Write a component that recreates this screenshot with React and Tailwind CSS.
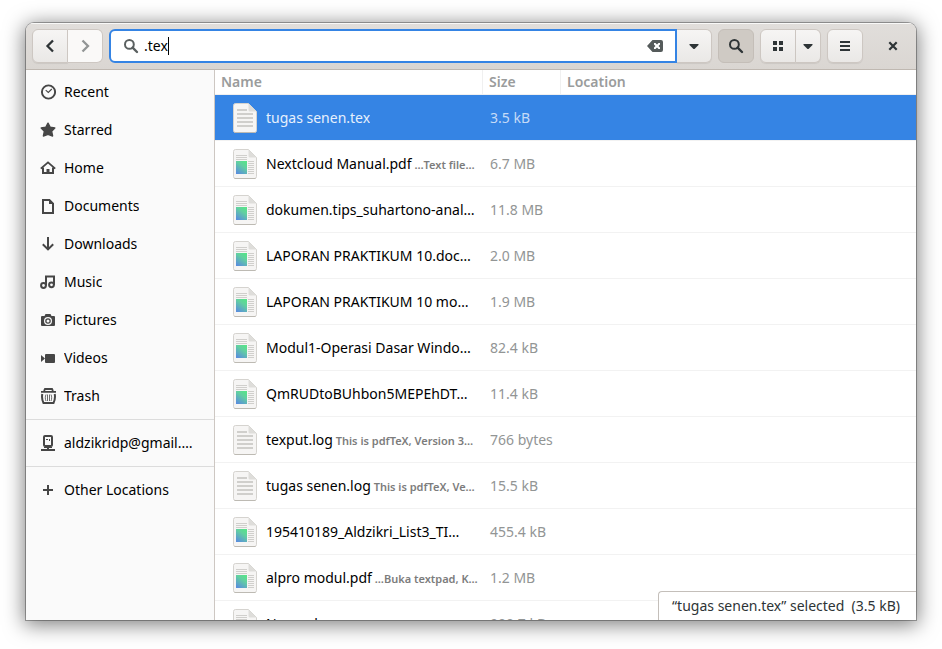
import React from "react";

const Icon = ({ children, className = "" }) => (
  <svg viewBox="0 0 16 16" width="16" height="16" fill="currentColor" className={`shrink-0 ${className}`} aria-hidden="true">
    {children}
  </svg>
);

const SearchIcon = ({ className }) => (
  <Icon className={className}>
    <circle cx="6.4" cy="6.4" r="4.4" fill="none" stroke="currentColor" strokeWidth="2" />
    <path d="M9.6 9.6 L14 14" stroke="currentColor" strokeWidth="2.4" strokeLinecap="round" />
  </Icon>
);

const CaretDown = () => (
  <Icon>
    <path d="M3.5 6h9v1L8.5 11h-1L3.5 7z" />
  </Icon>
);

const icons = {
  recent: (
    <Icon>
      <circle cx="8.5" cy="8" r="6.6" fill="none" stroke="currentColor" strokeWidth="1.9" />
      <path d="M5.7 6.2 8.3 8.5 11.8 5" fill="none" stroke="currentColor" strokeWidth="1.1" />
    </Icon>
  ),
  starred: (
    <Icon>
      <path
        d="M8 1.2 10.1 5.2 14.8 5.9 11.6 9.2 12.6 14 8 12.3 3.4 14 4.4 9.2 1.2 5.9 5.9 5.2z"
        stroke="currentColor"
        strokeWidth="1.4"
        strokeLinejoin="round"
      />
    </Icon>
  ),
  home: (
    <Icon>
      <path d="M.8 8.6 8 2.4l7.2 6.2" fill="none" stroke="currentColor" strokeWidth="1.9" />
      <path d="M3 7.5V13h10V7.5" fill="none" stroke="currentColor" strokeWidth="2" />
      <path d="M6.5 9h3v4h-3z" />
    </Icon>
  ),
  documents: (
    <Icon>
      <path d="M3 2h6.4L13 5.6V15H3z" fill="none" stroke="currentColor" strokeWidth="2" />
      <path d="M9 2v4h4z" />
    </Icon>
  ),
  downloads: (
    <Icon>
      <path d="M8 1v12M2.800 8.200 8 13.400l5.200-5.200" fill="none" stroke="currentColor" strokeWidth="2" />
    </Icon>
  ),
  music: (
    <Icon>
      <circle cx="3.5" cy="11.5" r="2.4" fill="none" stroke="currentColor" strokeWidth="2" />
      <circle cx="11.5" cy="10.8" r="2.4" fill="none" stroke="currentColor" strokeWidth="2" />
      <path d="M6 11.5V2.5h8V11" fill="none" stroke="currentColor" strokeWidth="2" />
    </Icon>
  ),
  pictures: (
    <Icon>
      <path
        fillRule="evenodd"
        d="M5.5 2h5l1 2H14a1 1 0 0 1 1 1v8a1 1 0 0 1-1 1H2a1 1 0 0 1-1-1V5a1 1 0 0 1 1-1h2.500zM8 5a4 4 0 1 0 0 8 4 4 0 0 0 0-8z"
      />
      <path fillRule="evenodd" d="M8 6.200a2.800 2.800 0 1 0 0 5.600 2.800 2.800 0 0 0 0-5.600zM8 7.500a1.500 1.500 0 1 1 0 3 1.500 1.500 0 0 1 0-3z" />
    </Icon>
  ),
  videos: (
    <Icon>
      <rect x="5" y="4" width="10" height="9" rx="1" />
      <path d="M1 5v7l4-3.500z" />
    </Icon>
  ),
  trash: (
    <Icon>
      <path d="M1 3.900h15M4 3l1-2h7l1 2" fill="none" stroke="currentColor" strokeWidth="1.800" />
      <path d="M2.300 6c-.6 3-.3 6 1.200 9h10c1.500-3 1.800-6 1.200-9" fill="none" stroke="currentColor" strokeWidth="2" />
      <path d="M6 6.500c-.9 2-.9 4.500 0 6.500M11 6.500c.9 2 .9 4.500 0 6.500M7.500 6.500v6.500M9.500 6.500v6.500" fill="none" stroke="currentColor" strokeWidth=".8" />
    </Icon>
  ),
  server: (
    <Icon>
      <rect x="4" y="1" width="8" height="10" rx="1" fill="none" stroke="currentColor" strokeWidth="2" />
      <path d="M6 4h2v1H6zM9 4h1v2H9zM7 11h2v3H7zM1 14h14v2H1zM4 12h8v1H4z" />
    </Icon>
  ),
  plus: (
    <Icon>
      <path d="M7 3h2v4h4v2H9v4H7V9H3V7h4z" />
    </Icon>
  ),
};

const places = [
  ["recent", "Recent"],
  ["starred", "Starred"],
  ["home", "Home"],
  ["documents", "Documents"],
  ["downloads", "Downloads"],
  ["music", "Music"],
  ["pictures", "Pictures"],
  ["videos", "Videos"],
  ["trash", "Trash"],
];

const files = [
  { type: "text", name: "tugas senen.tex", size: "3.5 kB", selected: true },
  { type: "doc", name: "Nextcloud Manual.pdf", match: "…Text file…", size: "6.7 MB" },
  { type: "doc", name: "dokumen.tips_suhartono-anal…", size: "11.8 MB" },
  { type: "doc", name: "LAPORAN PRAKTIKUM 10.doc…", size: "2.0 MB" },
  { type: "doc", name: "LAPORAN PRAKTIKUM 10 mo…", size: "1.9 MB" },
  { type: "doc", name: "Modul1-Operasi Dasar Windo…", size: "82.4 kB" },
  { type: "doc", name: "QmRUDtoBUhbon5MEPEhDT…", size: "11.4 kB" },
  { type: "text", name: "texput.log", match: "This is pdfTeX, Version 3…", size: "766 bytes" },
  { type: "text", name: "tugas senen.log", match: "This is pdfTeX, Ve…", size: "15.5 kB" },
  { type: "doc", name: "195410189_Aldzikri_List3_TI…", size: "455.4 kB" },
  { type: "doc", name: "alpro modul.pdf", match: "…Buka textpad, K…", size: "1.2 MB" },
  { type: "doc", name: "New-rules.", match: "…format file: Modul…", size: "900.7 kB" },
];

function FileIcon({ type }) {
  return (
    <svg viewBox="0 0 24 30" width="24" height="30" className="shrink-0" aria-hidden="true">
      <defs>
        <linearGradient id="thumb" x1="0.8" y1="0" x2="0.2" y2="1">
          <stop offset="0" stopColor="#57e389" />
          <stop offset="0.35" stopColor="#62d0a0" />
          <stop offset="1" stopColor="#5a8fdc" />
        </linearGradient>
      </defs>
      <path d="M2.500.5h13l8 8v19a2 2 0 0 1-2 2h-19a2 2 0 0 1-2-2v-25a2 2 0 0 1 2-2z" fill="#f6f5f4" stroke="#d5d3cf" />
      <path d="M1.500 29.500h21" stroke="#bdbab3" />
      <path d="M15.500.5l8 8h-6.500a1.500 1.500 0 0 1-1.500-1.500z" fill="#deddda" />
      {type === "text" ? (
        <path d="M4 7h10M4 11h16M4 15h16M4 19h16M4 23h16" stroke="#d0cfcc" strokeWidth="1.800" />
      ) : (
        <>
          <path d="M3 6.500h11M3 8.500h11M3 10.500h11M15 12.500h6M15 14.500h6M15 16.500h6M15 18.500h6M15 20.500h6M15 22.500h6M15 24.500h6" stroke="#d0cfcc" />
          <rect x="3" y="12" width="11" height="13" fill="url(#thumb)" />
        </>
      )}
    </svg>
  );
}

const button =
  "flex h-[34px] items-center justify-center border border-[#cdc7c2] bg-linear-to-b from-[#f6f5f4] to-[#eae8e6] text-[#2e3436] shadow-[0_1px_1px_rgba(0,0,0,0.07)]";

function Place({ icon, label }) {
  return (
    <li>
      <a href="#" className="flex h-[38px] items-center gap-2 pr-4 pl-[14px] text-black">
        <span className="text-[#464646]">{icons[icon]}</span>
        <span className="truncate">{label}</span>
      </a>
    </li>
  );
}

export default function App() {
  return (
    <div className="h-screen overflow-hidden bg-white px-[26px] pt-[23px] pb-[29px] font-['Noto_Sans',sans-serif] text-sm">
      <div className="flex h-full flex-col overflow-hidden rounded-t-lg bg-white shadow-[0_0_0_1px_rgba(0,0,0,0.3),0_3px_20px_2px_rgba(0,0,0,0.5)]">
        <header className="flex shrink-0 items-center border-b border-[#bfb8b1] bg-linear-to-b from-[#e1dedb] to-[#dad6d2] px-[6px] py-[6px] shadow-[inset_0_1px_rgba(255,255,255,0.8)]">
          <div className="flex">
            <button aria-label="Back" className={`${button} w-9 rounded-l-md`}>
              <Icon><path d="M11 2.500 5.500 8l5.500 5.500" fill="none" stroke="currentColor" strokeWidth="2.300" /></Icon>
            </button>
            <button aria-label="Forward" disabled className="flex h-[34px] w-[35px] items-center justify-center rounded-r-md border border-l-0 border-[#cdc7c2] bg-[#faf9f8] text-[#929595]">
              <Icon><path d="M5.500 2.500 11 8l-5.500 5.500" fill="none" stroke="currentColor" strokeWidth="2.300" /></Icon>
            </button>
          </div>
          <div className="ml-[6px] flex min-w-0 flex-1">
            <div className="flex h-[34px] min-w-0 flex-1 items-center rounded-l-md border-2 border-[#3584e4] bg-white px-3">
              <SearchIcon className="text-[#5a6060]" />
              <input aria-label="Search files" defaultValue=".tex" className="ml-[5px] field-sizing-content bg-transparent text-black outline-none" />
              <span className="h-[18px] w-px bg-black" />
              <button aria-label="Clear search" className="ml-auto text-[#555b5b]">
                <Icon>
                  <path fillRule="evenodd" d="M5.500 2H14a2 2 0 0 1 2 2v8a2 2 0 0 1-2 2H5.500L0 8zM7 5v1.500L8.500 8 7 9.500V11h1.500L10 9.500l1.500 1.500H13V9.500L11.500 8 13 6.500V5h-1.500L10 6.500 8.500 5z" />
                </Icon>
              </button>
            </div>
            <button aria-label="Search options" className={`${button} w-[35px] rounded-r-md border-l-0`}>
              <CaretDown />
            </button>
          </div>
          <button aria-label="Search" aria-pressed="true" className="ml-[6px] flex h-[34px] w-9 items-center justify-center rounded-md border border-[#c4beb8] bg-[#cfcac4] text-[#2e3436]">
            <SearchIcon />
          </button>
          <div className="ml-[6px] flex">
            <button aria-label="Icon view" className={`${button} w-9 rounded-l-md`}>
              <Icon><path d="M3 3h4v4H3zM9 3h4v4H9zM3 9h4v4H3zM9 9h4v4H9z" /></Icon>
            </button>
            <button aria-label="View options" className={`${button} w-[25px] rounded-r-md border-l-0`}>
              <CaretDown />
            </button>
          </div>
          <button aria-label="Menu" className={`${button} ml-[6px] w-9 rounded-md`}>
            <Icon><path d="M3 3h10v2H3zM3 7h10v2H3zM3 11h10v2H3z" /></Icon>
          </button>
          <button aria-label="Close" className="ml-[13px] flex h-[34px] w-[34px] items-center justify-center text-[#2e3436]">
            <Icon><path d="m4.300 4.300 7.400 7.400M11.700 4.300l-7.400 7.400" stroke="currentColor" strokeWidth="2.200" /></Icon>
          </button>
        </header>

        <div className="flex min-h-0 flex-1">
          <nav className="w-[189px] shrink-0 overflow-hidden border-r border-[#cdc7c2] bg-[#fafafa] pt-[3px]">
            <ul>
              {places.map(([icon, label]) => (
                <Place key={icon} icon={icon} label={label} />
              ))}
            </ul>
            <ul className="mt-1 border-y border-[#dcdcdc] py-1">
              <Place icon="server" label="aldzikridp@gmail.…" />
            </ul>
            <ul className="pt-1">
              <Place icon="plus" label="Other Locations" />
            </ul>
          </nav>

          <main className="relative min-w-0 flex-1 overflow-hidden bg-white">
            <table className="w-full table-fixed border-separate border-spacing-0 text-left">
              <thead>
                <tr className="h-[25px] text-[#9a9c9c]">
                  <th className="w-[268px] border-r border-b border-[#f0f0f0] px-[6px] py-0 font-semibold">Name</th>
                  <th className="w-[78px] border-r border-b border-[#f0f0f0] px-[6px] py-0 font-semibold">Size</th>
                  <th className="border-b border-[#f0f0f0] px-[6px] py-0 font-semibold">Location</th>
                </tr>
              </thead>
              <tbody>
                {files.map((f) => (
                  <tr key={f.name} className={f.selected ? "h-[46px] bg-[#3584e4] text-[#e6f0fc]" : "h-[46px] text-black"}>
                    <td className="border-b border-[#f2f2f2] py-0 pr-0 pl-[18px]">
                      <div className="flex items-center gap-[9px]">
                        <FileIcon type={f.type} />
                        <span className="overflow-hidden whitespace-nowrap">
                          {f.name}
                          {f.match && <span className="text-[11px] font-semibold text-[#7c7c7c]"> {f.match}</span>}
                        </span>
                      </div>
                    </td>
                    <td className={`border-b border-[#f2f2f2] py-0 pr-0 pl-[7px] whitespace-nowrap ${f.selected ? "text-[#c5dbf7]" : "text-[#929595]"}`}>{f.size}</td>
                    <td className="border-b border-[#f2f2f2]" />
                  </tr>
                ))}
              </tbody>
            </table>
            <div role="status" className="absolute right-0 bottom-0 h-[29px] rounded-tl-sm border-t border-l border-[#c4bfba] bg-white pr-4 pl-[13px] leading-7 whitespace-pre text-[#2e3436]">
              “tugas senen.tex” selected  (3.5 kB)
            </div>
          </main>
        </div>
      </div>
    </div>
  );
}
